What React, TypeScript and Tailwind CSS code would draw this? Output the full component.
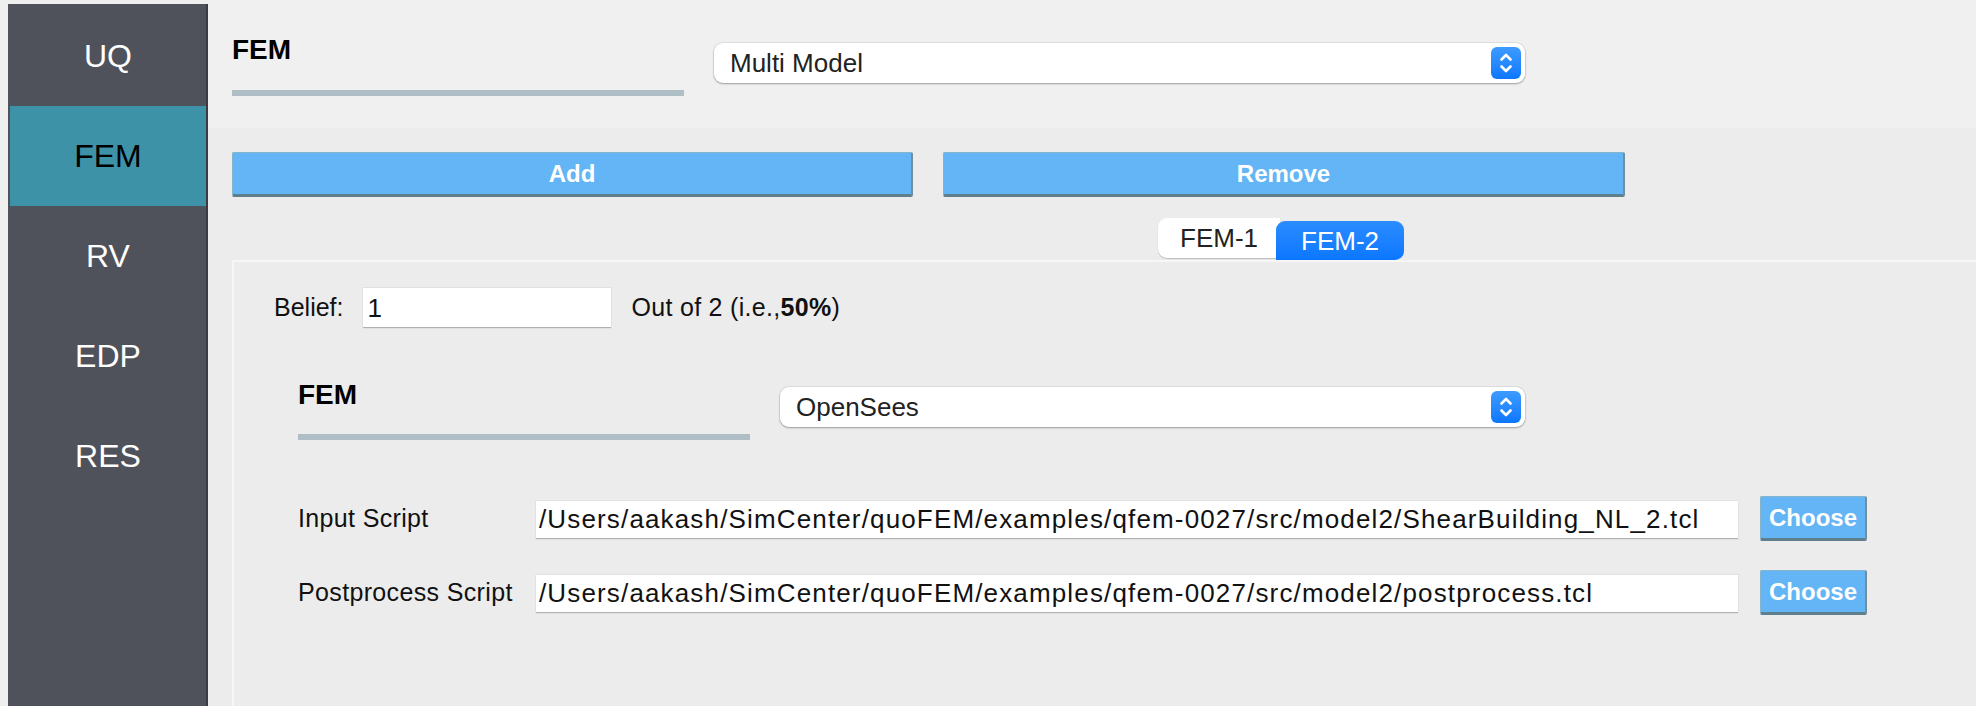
import React from "react";

function Stepper({ className }: { className: string }) {
  return (
    <div className={"flex items-center justify-center rounded-[6px] bg-gradient-to-b from-[#3d9bff] to-[#0a77ff] " + className}>
      <svg width="16" height="24" viewBox="0 0 16 24" fill="none" stroke="white" strokeWidth="2.6" strokeLinecap="round" strokeLinejoin="round">
        <path d="M3.5 8.5 L8 4 L12.5 8.5" />
        <path d="M3.5 15.5 L8 20 L12.5 15.5" />
      </svg>
    </div>
  );
}

function Select({ label, width }: { label: string; width: string }) {
  return (
    <div className={"h-[40px] bg-white rounded-[9px] shadow-[0_1px_2px_rgba(0,0,0,0.3),0_0_0_1px_rgba(0,0,0,0.06)] flex items-center justify-between pl-[16px] pr-[4px] " + width}>
      <span className="text-[26px] leading-none text-[#222]">{label}</span>
      <Stepper className="w-[30px] h-[32px]" />
    </div>
  );
}

function BlueButton({ label, className }: { label: string; className: string }) {
  return (
    <div className={"bg-[#64b5f6] border border-[#86b3cc] border-b-[3px] border-b-[#5f7f8c] border-r-[2px] border-r-[#6f8f9c] rounded-[2px] flex items-center justify-center text-white font-bold text-[24px] leading-none " + className}>
      {label}
    </div>
  );
}

function PathRow({ label, path }: { label: string; path: string }) {
  return (
    <div className="flex items-center h-[45px]">
      <div className="w-[238px] text-[25px] leading-none text-[#111] tracking-[0.35px]">{label}</div>
      <div className="w-[1202px] h-[38px] bg-white border-t border-t-[#e2e2e2] shadow-[0_1px_1px_rgba(0,0,0,0.25)] flex items-center pl-[3px] text-[26px] leading-none text-[#111] tracking-[1.15px] whitespace-nowrap overflow-hidden">
        {path}
      </div>
      <BlueButton label="Choose" className="ml-[22px] w-[107px] h-[45px]" />
    </div>
  );
}

export default function App() {
  const items = ["UQ", "FEM", "RV", "EDP", "RES"];
  return (
    <div className="w-[1976px] h-[706px] bg-[#efefef] flex overflow-hidden [font-family:'Liberation_Sans',Arial,sans-serif]">
      <div className="ml-[8px] mt-[4px] w-[200px] h-[702px] bg-[#4f525a] border-r-2 border-[#3a3c41] pl-[2px] pt-[2px] flex flex-col shrink-0">
        {items.map((it) => (
          <div
            key={it}
            className={
              "h-[100px] flex items-center justify-center text-[32px] leading-none " +
              (it === "FEM" ? "bg-[#3e92a8] text-black" : "text-white")
            }
          >
            {it}
          </div>
        ))}
      </div>
      <div className="flex-1 flex flex-col">
        <div className="h-[128px] bg-[#f0f0f0] flex pl-[24px] shrink-0">
          <div className="w-[452px] flex flex-col">
            <div className="mt-[36px] text-[28px] font-bold leading-none text-black">FEM</div>
            <div className="mt-[26px] h-[6px] bg-[#b0bec5]" />
          </div>
          <div className="ml-[30px] mt-[43px]">
            <Select label="Multi Model" width="w-[811px]" />
          </div>
        </div>
        <div className="flex-1 bg-[#ececec] flex flex-col">
          <div className="mt-[24px] pl-[24px] flex gap-[30px]">
            <BlueButton label="Add" className="w-[681px] h-[45px]" />
            <BlueButton label="Remove" className="w-[682px] h-[45px]" />
          </div>
          <div className="mt-[21px] ml-[950px] flex items-end h-[42px]">
            <div className="w-[122px] h-[40px] mb-[2px] bg-white rounded-l-[9px] shadow-[0_1px_1px_rgba(0,0,0,0.2)] flex items-center justify-center text-[26px] leading-none text-[#222]">
              FEM-1
            </div>
            <div className="-ml-[4px] w-[128px] h-[39px] bg-gradient-to-b from-[#2a8cff] to-[#0a77ff] rounded-[9px] rounded-bl-none flex items-center justify-center text-[26px] leading-none text-white">
              FEM-2
            </div>
          </div>
          <div className="flex-1 ml-[24px] border-t-2 border-l-2 border-[#f6f6f6] flex flex-col">
            <div className="mt-[25px] pl-[40px] flex items-center h-[40px]">
              <span className="text-[25px] leading-none text-[#111]">Belief:</span>
              <div className="ml-[20px] w-[248px] h-[40px] bg-white border-t border-t-[#e0e0e0] shadow-[0_1px_1px_rgba(0,0,0,0.25)] flex items-center pl-[4px] text-[26px] leading-none text-[#111]">
                1
              </div>
              <span className="ml-[20px] text-[25px] leading-none text-[#111] tracking-[0.3px]">
                Out of 2 (i.e.,<b>50%</b>)
              </span>
            </div>
            <div className="mt-[54px] pl-[64px] flex">
              <div className="w-[452px] flex flex-col">
                <div className="text-[28px] font-bold leading-none text-black">FEM</div>
                <div className="mt-[25px] h-[6px] bg-[#b0bec5]" />
              </div>
              <div className="ml-[30px] mt-[6px]">
                <Select label="OpenSees" width="w-[745px]" />
              </div>
            </div>
            <div className="mt-[56px] pl-[64px] flex flex-col gap-[29px]">
              <PathRow label="Input Script" path="/Users/aakash/SimCenter/quoFEM/examples/qfem-0027/src/model2/ShearBuilding_NL_2.tcl" />
              <PathRow label="Postprocess Script" path="/Users/aakash/SimCenter/quoFEM/examples/qfem-0027/src/model2/postprocess.tcl" />
            </div>
          </div>
        </div>
      </div>
    </div>
  );
}
